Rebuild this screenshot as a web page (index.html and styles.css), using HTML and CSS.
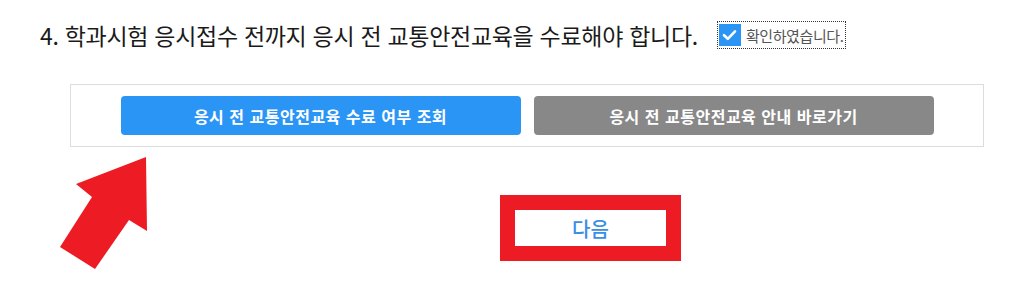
FILE: index.html
```html
<!DOCTYPE html>
<html lang="ko">
<head>
    <meta charset="UTF-8">
    <meta name="viewport" content="width=device-width, initial-scale=1.0">
    <title>학과시험 응시 안내</title>
    <link rel="stylesheet" href="styles.css">
</head>
<body>
    <div class="page">
        <!-- Question row -->
        <div class="question">
            <h2>4. 학과시험 응시접수 전까지 응시 전 교통안전교육을 수료해야 합니다.</h2>
            <label class="confirm">
                <span class="check-box">
                    <svg width="15" height="12" viewBox="0 0 15 12"><path d="M2 6.2 L5.8 9.8 L13 2.4" fill="none" stroke="#fff" stroke-width="2.6" stroke-linecap="round" stroke-linejoin="round"/></svg>
                </span>
                <span class="confirm-text">확인하였습니다.</span>
            </label>
        </div>

        <!-- Education buttons -->
        <div class="panel">
            <button class="btn btn-blue">응시 전 교통안전교육 수료 여부 조회</button>
            <button class="btn btn-grey">응시 전 교통안전교육 안내 바로가기</button>
        </div>

        <!-- Next button -->
        <div class="next-area">
            <div class="next-frame">
                <button class="next">다음</button>
            </div>
        </div>

        <!-- Annotation arrow -->
        <svg class="arrow" width="100" height="120" viewBox="55 152 100 120">
            <polygon points="146,157 147,231 129,220 95,269 60,247 92,197 76,184" fill="#ed1c24"/>
        </svg>
    </div>
</body>
</html>
```

FILE: styles.css
```css
body {
    margin: 0;
    background: #fff;
    font-family: "Malgun Gothic", "Noto Sans CJK KR", sans-serif;
}
.page {
    position: relative;
    width: 1032px;
    height: 282px;
}
.question {
    display: flex;
    align-items: center;
    padding: 20px 0 0 40px;
    height: 30px;
}
.question h2 {
    margin: 0;
    font-size: 23px;
    font-weight: 400;
    color: #1a1a1a;
    letter-spacing: -0.3px;
}
.confirm {
    display: inline-flex;
    align-items: center;
    margin-left: 20px;
    padding: 2px 1px 2px 1px;
    outline: 1px dotted #333;
    gap: 5px;
}
.check-box {
    width: 22px;
    height: 22px;
    background-color: #2b95f5;
    display: flex;
    justify-content: center;
    align-items: center;
}
.confirm-text {
    font-size: 15px;
    color: #555;
    letter-spacing: -0.4px;
}
.panel {
    margin: 34px 0 0 70px;
    width: 912px;
    height: 61px;
    border: 1px solid #ddd;
    display: flex;
    justify-content: center;
    align-items: center;
    gap: 13px;
}
.btn {
    width: 400px;
    height: 39px;
    border: none;
    border-radius: 4px;
    color: #fff;
    font-family: inherit;
    font-size: 16px;
    font-weight: 700;
    letter-spacing: 0.5px;
    cursor: pointer;
}
.btn-blue {
    background-color: #2b95f5;
}
.btn-grey {
    background-color: #888;
}
.next-area {
    padding: 48px 0 0 500px;
}
.next-frame {
    display: inline-block;
    border: 15px solid #ed1c24;
}
.next {
    display: block;
    width: 151px;
    height: 36px;
    border: none;
    background: #fff;
    color: #3a8ee6;
    font-family: inherit;
    font-size: 20px;
    font-weight: 500;
    cursor: pointer;
}
.arrow {
    position: absolute;
    left: 55px;
    top: 152px;
}
```
